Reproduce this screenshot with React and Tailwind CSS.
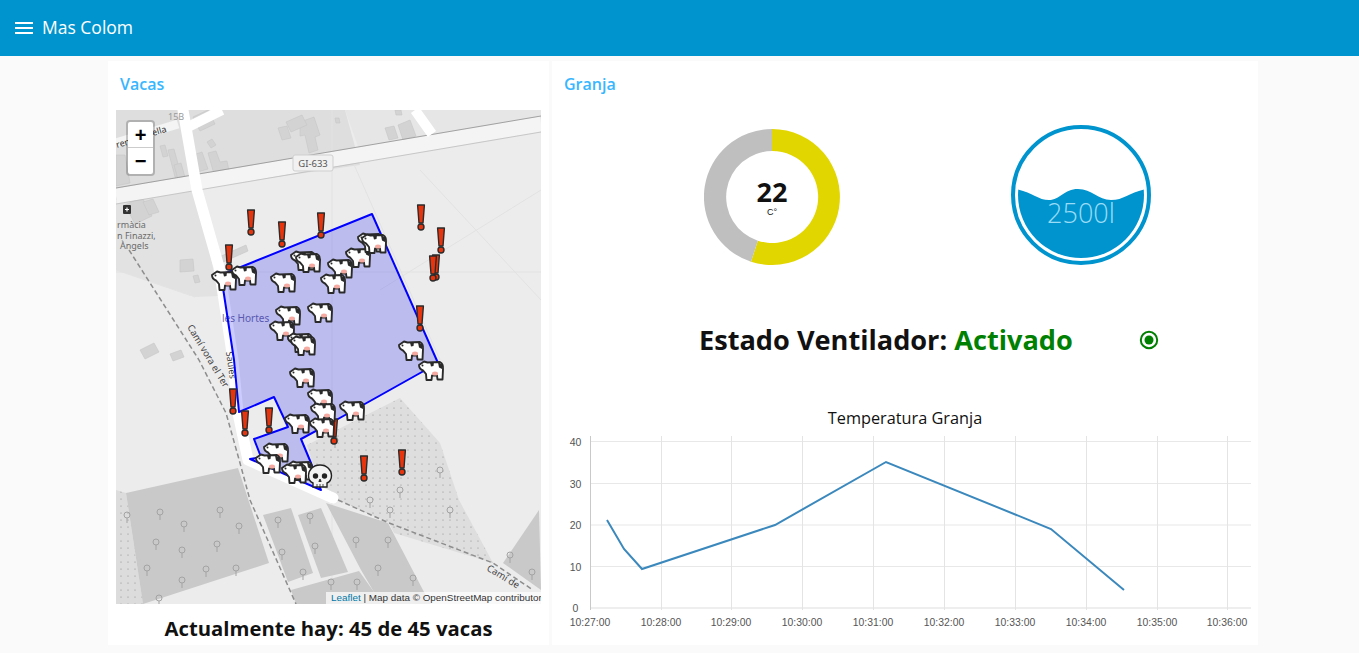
import React from "react";
import { MdMenu } from "react-icons/md";

const COWS = [
  [224, 280], [244, 275], [283, 282], [288, 315], [282, 330], [300, 342], [303, 345], [320, 312],
  [303, 260], [308, 262], [340, 268], [333, 283], [358, 257], [370, 242], [374, 243], [411, 350],
  [431, 370], [302, 377], [320, 398], [323, 412], [352, 410], [297, 423], [322, 427], [276, 452],
  [268, 463], [300, 470], [294, 473],
];
const ALERTS = [
  [251, 222], [282, 234], [321, 225], [421, 217], [441, 240], [436, 267], [433, 268], [420, 318],
  [229, 257], [233, 401], [245, 423], [269, 420], [334, 431], [364, 468], [402, 462],
];
const TREES = [
  [127, 515], [160, 512], [184, 524], [220, 510], [239, 526], [156, 542], [182, 550], [217, 544],
  [147, 568], [206, 569], [182, 580], [236, 568], [159, 598], [278, 520], [282, 552], [303, 572],
  [310, 516], [315, 546], [331, 582], [357, 582], [356, 540], [378, 568], [388, 540], [413, 578],
  [390, 510], [450, 510], [510, 555], [532, 572], [440, 470], [370, 500], [335, 440], [400, 490],
];
const BUILDINGS = [
  "M395 110l6 0 1 5-6 0z", "M398 125l12-5 6 16-13 4z", "M385 128l9-2 4 12-9 2z",
  "M300 122l14-5 6 18-5 2 3 13-9 3-4-18-5 1z", "M278 128l9-2 4 12-9 2z", "M335 118l4 0 1 5-4 0z",
  "M302 115l-16 7 5 10 16-7z", "M193 117l15-7 7 14-15 7z",
  "M160 146l5-1 3 11-5 1z", "M168 150l6-1 7 26-6 2z", "M174 165l7-2 5 18-7 2z",
  "M193 155l9-3 6 17-14 4z", "M208 153l8-2 4 11 7-1 2 10-15 3z", "M207 142l5-3 4 6-5 3z",
  "M116 155l9 0 5 28-14 3z", "M125 205l17-8 10 19-17 8z",
  "M143 202l10-3 6 13-10 3z", "M180 260l13-1 1 12-14 1z", "M193 276l5-1 2 7-5 1z",
  "M140 350l14-7 5 9-14 7z", "M170 354l11-4 3 7-11 4z", "M219 257l27-12 2 6-27 12z",
];

function MapDefs() {
  return (
    <defs>
      <pattern id="dots" width="7" height="7" patternUnits="userSpaceOnUse">
        <circle cx="2" cy="2" r="0.6" fill="#888" />
      </pattern>
      <clipPath id="mapclip">
        <rect x="116" y="110" width="425" height="494" />
      </clipPath>
      <symbol id="cow" viewBox="0 0 26 22" overflow="visible">
        <path
          d="M1 6 L6 2.500 L9.500 3.500 L22 3 Q25.500 4.500 25 10 L24.500 20.500 H19.500 L19 16.500 H14 L13.500 21 H8.500 L8 15 Q6 12.500 5 11.500 Q1 10 1 6Z"
          fill="#fff"
          stroke="#2a2a2a"
          strokeWidth="1.900"
          strokeLinejoin="round"
        />
        <path d="M12 3.500 L16 3 L15.500 7 L13 7.500z M20 3.500 L24.500 5 L24 10 L21 8.500z" fill="#2a2a2a" />
        <ellipse cx="17" cy="14.500" rx="3" ry="2" fill="#f6a9a0" />
        <circle cx="4.500" cy="6.500" r="1" fill="#2a2a2a" />
      </symbol>
      <symbol id="alert" viewBox="-5 -13 10 27" overflow="visible">
        <path d="M-3.400-12H3.400L2 6H-2z" fill="#e8340c" stroke="#2b2b2b" strokeWidth="1.400" strokeLinejoin="round" />
        <circle cx="0" cy="10" r="3" fill="#e8340c" stroke="#2b2b2b" strokeWidth="1.400" />
      </symbol>
    </defs>
  );
}

function MapDrawing() {
  return (
    <svg viewBox="116 110 425 494" className="block h-full w-full">
      <MapDefs />
      <g clipPath="url(#mapclip)">
        <rect x="116" y="110" width="425" height="494" fill="#ececec" />
        <path d="M116 110H345L360 165 116 200z" fill="#dedede" />
        <path d="M345 110H541V118L360 152z" fill="#e6e6e6" />
        <path d="M116 204L199 190 218 296 195 297 116 270z" fill="#e2e2e2" />
        <path d="M116 270L195 297" stroke="#e3e3e3" fill="none" />
        <path d="M352 160L440 360M541 190L380 290M420 170L541 300M116 272H541M332 110V604" stroke="#e2e2e2" fill="none" />
        <path d="M116 143L178 124" stroke="#f4f4f4" strokeWidth="9" fill="none" />
        {BUILDINGS.map((d, i) => (
          <path key={i} d={d} fill="#d3d3d3" stroke="#c6c6c6" strokeWidth="0.6" />
        ))}

        <path d="M116 490L126 493 143 604H116z" fill="#dcdcdc" />
        <path d="M116 490L126 493 143 604H116z" fill="url(#dots)" />
        <path d="M307 445L400 398 440 443 459 500 493 563 394 533 389 523 338 500 321 490z" fill="#dedede" />
        <path d="M307 445L400 398 440 443 459 500 493 563 394 533 389 523 338 500 321 490z" fill="url(#dots)" />
        <g fill="#c9c9c9">
          <path d="M126 493L238 468 269 563 143 604z" />
          <path d="M263 515L291 508 313 573 288 582z" />
          <path d="M298 515L321 508 348 572 321 578z" />
          <path d="M291 590L359 571 374 592 381 604H296z" />
          <path d="M326 503L388 523 424 592 431 604H381L361 570z" />
          <path d="M539 510L503 563 541 590z" />
        </g>
        {TREES.map(([x, y], i) => (
          <g key={i} fill="none" stroke="#a3a3a3" strokeWidth="1">
            <circle cx={x} cy={y} r="3" />
            <path d={`M${x} ${y + 3}v5`} />
          </g>
        ))}

        <path d="M116 196L541 124" stroke="#f4f4f4" strokeWidth="15" fill="none" />
        <path d="M116 188L541 116" stroke="#8f8f8f" strokeWidth="0.8" fill="none" />
        <path d="M116 204L541 132" stroke="#bdbdbd" strokeWidth="0.8" fill="none" />
        <path
          d="M183 110L197 190 219 267 233 360 238 413 248 460 333 498"
          stroke="#fff"
          strokeWidth="11"
          strokeLinejoin="round"
          strokeLinecap="round"
          fill="none"
        />
        <path d="M186 128L222 110M415 110L432 134" stroke="#fff" strokeWidth="10" fill="none" />
        <path
          d="M129 250L199 360 226 413 240 463 250 500 296 604M338 500L389 523 493 563 533 590"
          stroke="#8d8d8d"
          strokeWidth="1.500"
          strokeDasharray="5 3"
          fill="none"
        />

        <g fontFamily="'Noto Sans', sans-serif" fill="#6a6a6a" fontSize="9">
          <text x="168" y="120" fill="#9a9a9a">15B</text>
          <text x="117" y="148" transform="rotate(-16 117 148)" fill="#333">ren</text>
          <text x="153" y="136" transform="rotate(-17 153 136)" fill="#333">ella</text>
          <text x="117" y="228">rmàcia</text>
          <text x="117" y="238.500">n Finazzi,</text>
          <text x="120" y="249">Àngels</text>
          <text x="222" y="322" fontSize="10" fill="#6f6f9c">les Hortes</text>
          <text x="226" y="352" transform="rotate(82 226 352)" fill="#333">Saules</text>
          <text x="187" y="327" transform="rotate(59 187 327)" fill="#444" fontSize="9.500">Camí vora el Ter</text>
          <text x="486" y="570" transform="rotate(31 486 570)" fill="#444" fontSize="9.500">Camí de</text>
        </g>
        <rect x="123" y="205" width="8" height="9" rx="1" fill="#333" />
        <path d="M125 209.500h4M127 207.500v4" stroke="#fff" strokeWidth="1.200" />

        <rect x="293" y="155" width="40" height="16" rx="2" fill="#f1f1f1" stroke="#cfcfcf" />
        <text x="313" y="167" textAnchor="middle" fontSize="9.500" fill="#555" fontFamily="'Noto Sans', sans-serif">GI-633</text>

        <path
          d="M226 273L372 214 438 363 338 419 301 439 311 463 321 490 250 459 261 457 254 439 288 427 274 397 239 412 234 360 223 288z"
          fill="#0000ff"
          fillOpacity="0.2"
          stroke="#0000ff"
          strokeWidth="2"
          strokeLinejoin="round"
        />
        {ALERTS.map(([x, y], i) => (
          <use key={i} href="#alert" x={x - 5} y={y - 13} width="10" height="27" />
        ))}
        {COWS.map(([x, y], i) => (
          <use key={i} href="#cow" x={x - 13} y={y - 11} width="26" height="22" />
        ))}
        <g>
          <path
            d="M320 465c7 0 11.500 5 11.500 10.500 0 4-2 6.500-4.500 7.500v4h-14v-4c-2.500-1-4.500-3.500-4.500-7.500 0-5.500 4.500-10.500 11.500-10.500z"
            fill="#f3f3f3"
            stroke="#222"
            strokeWidth="1.400"
          />
          <circle cx="315.500" cy="476" r="2.700" fill="#222" />
          <circle cx="324.500" cy="476" r="2.700" fill="#222" />
          <path d="M320 479l-1.200 2.500h2.400zM317 484v3M320 484v3M323 484v3" fill="#222" stroke="#222" strokeWidth="0.800" />
        </g>
      </g>
    </svg>
  );
}

function Gauge() {
  return (
    <div className="relative mt-1 h-[136px] w-[136px]">
      <svg viewBox="704 129 136 136" className="block h-full w-full">
        <path d="M772 129A68 68 0 1 1 751 261.700L757.800 240.700A46 46 0 1 0 772 151z" fill="#e2d600" />
        <path d="M772 129A68 68 0 0 0 751 261.700L757.800 240.700A46 46 0 0 1 772 151z" fill="#bfbfbf" />
      </svg>
      <div className="absolute inset-0 flex flex-col items-center justify-center">
        <span className="text-[27px] font-bold leading-[28px] text-[#111]">22</span>
        <span className="mt-px font-['Liberation_Sans'] text-[9px] leading-[10px] text-[#111]">C°</span>
      </div>
    </div>
  );
}

function Tank() {
  return (
    <svg viewBox="1011 125 140 140" className="block h-[140px] w-[140px]">
      <defs>
        <clipPath id="tankclip">
          <circle cx="1081" cy="195" r="63" />
        </clipPath>
      </defs>
      <circle cx="1081" cy="195" r="68" fill="#fff" stroke="#0094ce" strokeWidth="4" />
      <path
        d="M1016 189C1032 192 1038 200 1049 200C1060 200 1064 189 1078 189C1092 189 1098 200 1111 200C1124 200 1130 192 1146 189V262H1016z"
        fill="#0094ce"
        clipPath="url(#tankclip)"
      />
      <text
        x="1081"
        y="223"
        textAnchor="middle"
        fontSize="27"
        fontWeight="300"
        fill="#9adcf6"
        fontFamily="'Open Sans', sans-serif"
      >
        2500l
      </text>
    </svg>
  );
}

function TempChart() {
  const xTicks = [
    [590.5, "10:27:00"], [661.5, "10:28:00"], [731.5, "10:29:00"], [802.5, "10:30:00"], [873.5, "10:31:00"],
    [944.5, "10:32:00"], [1015.5, "10:33:00"], [1086.5, "10:34:00"], [1157.5, "10:35:00"], [1227.5, "10:36:00"],
  ];
  const yTicks = [[441.5, 40], [483.5, 30], [525, 20], [566.5, 10], [608, 0]];
  return (
    <svg viewBox="552 432 706 200" className="mt-1 block h-[200px] w-full">
      {yTicks.map(([y, label]) => (
        <g key={label}>
          <line x1="590" x2="1251" y1={y} y2={y} stroke="#e8e8e8" strokeWidth={label === 0 ? 1.4 : 1.2} />
          <text x="575.500" y={y + 4} textAnchor="middle" fontSize="10.500" fill="#555" fontFamily="'Liberation Sans', sans-serif">
            {label}
          </text>
        </g>
      ))}
      {xTicks.map(([x, label], i) => (
        <g key={label}>
          <line x1={x} x2={x} y1="436" y2="610" stroke={i === 0 ? "#c9c9c9" : "#e4e4e4"} />
          <text x={x - 0.5} y="626" textAnchor="middle" fontSize="10.400" fill="#555" fontFamily="'Liberation Sans', sans-serif">
            {label}
          </text>
        </g>
      ))}
      <polyline
        points="607,520 624,549 642,569 775,525 886,462 1051,529 1124,590"
        fill="none"
        stroke="#3b88bd"
        strokeWidth="2"
      />
    </svg>
  );
}

export default function App() {
  return (
    <div className="flex h-[653px] flex-col overflow-hidden bg-[#fafafa] font-['Open_Sans',sans-serif]">
      <header className="flex h-14 shrink-0 items-center gap-[6px] bg-[#0094ce] pl-3 text-white">
        <MdMenu size={24} />
        <span className="text-[17.500px] leading-none">Mas Colom</span>
      </header>

      <main className="flex justify-center gap-[3px] pt-[5px] pl-[7px]">
        {/* Vacas */}
        <section className="h-[584px] w-[441px] bg-white">
          <h2 className="px-3 pt-[13px] pb-[16px] text-base font-semibold leading-5 text-[#38b6ff]">Vacas</h2>
          <div className="relative mx-2 h-[494px] w-[425px] overflow-hidden">
            <MapDrawing />
            <div className="absolute top-[10px] left-[10px] w-[29px] overflow-hidden rounded border-2 border-black/20 bg-white bg-clip-padding">
              <div className="flex h-[26px] items-center justify-center border-b border-[#ccc] font-['Liberation_Sans'] text-[20px] font-bold leading-none text-black">+</div>
              <div className="flex h-[26px] items-center justify-center font-['Liberation_Sans'] text-[20px] font-bold leading-none text-black">−</div>
            </div>
            <div className="absolute right-0 bottom-0 w-[215px] overflow-hidden whitespace-nowrap bg-white/70 pl-[5px] font-['Liberation_Sans'] text-[9.900px] leading-[12px] text-[#333]">
              <span className="text-[#0078a8]">Leaflet</span> | Map data © OpenStreetMap contributors
            </div>
          </div>
          <p className="pt-3 text-center text-[20.300px] font-bold leading-6 text-[#111]">Actualmente hay: 45 de 45 vacas</p>
        </section>

        {/* Granja */}
        <section className="h-[584px] w-[706px] bg-white">
          <h2 className="px-3 pt-[13px] pb-[16px] text-base font-semibold leading-5 text-[#38b6ff]">Granja</h2>
          <div className="flex items-start gap-[171px] pt-[15px] pl-[152px]">
            <Gauge />
            <Tank />
          </div>
          <div className="relative mt-[55px] flex h-10 items-center pl-[147px]">
            <span className="text-[27.150px] font-bold leading-10 text-[#111]">
              Estado Ventilador: <span className="text-[#008000]">Activado</span>
            </span>
            <svg viewBox="0 0 20 20" className="absolute top-[10px] left-[587px] h-5 w-5">
              <circle cx="10" cy="10" r="8.200" fill="none" stroke="#008000" strokeWidth="2" />
              <circle cx="10" cy="10" r="4.500" fill="#008000" />
            </svg>
          </div>
          <p className="pt-[48px] text-center text-[16.300px] leading-5 text-[#111]">Temperatura Granja</p>
          <TempChart />
        </section>
      </main>
    </div>
  );
}
